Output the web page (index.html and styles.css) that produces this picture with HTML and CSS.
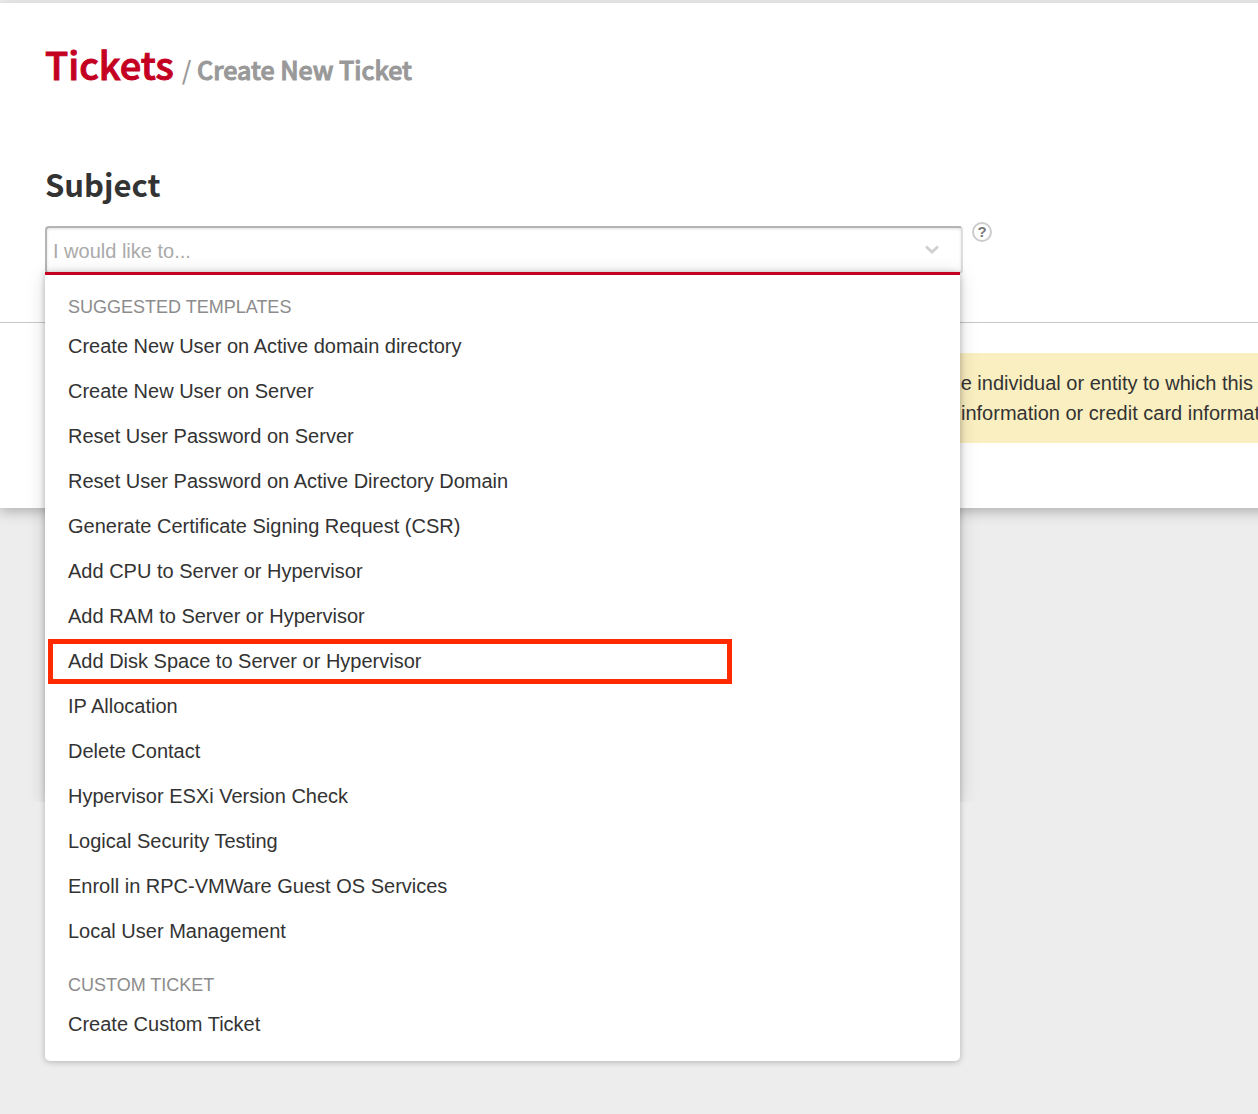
FILE: index.html
```html
<!DOCTYPE html>
<html lang="en">
<head>
<meta charset="utf-8">
<title>Tickets / Create New Ticket</title>
<meta name="viewport" content="width=device-width, initial-scale=1">
<link rel="stylesheet" href="styles.css">
</head>
<body>
<main class="panel">
  <header class="page-header">
    <h1 class="title">Tickets</h1>
    <p class="crumb"><span class="slash">/</span> Create New Ticket</p>
  </header>
  <section class="subject">
    <h2 class="subject-title"><label for="subject">Subject</label></h2>
    <div class="subject-row">
      <div class="combo">
        <input class="combo-input" id="subject" type="text" placeholder="I would like to..." autocomplete="off">
        <svg class="chevron" viewBox="0 0 14 9" aria-hidden="true"><path d="M1 1.5 7 7 13 1.5"/></svg>
        <div class="menu">
          <h3 class="group">SUGGESTED TEMPLATES</h3>
          <ul class="options">
            <li><button class="option" type="button">Create New User on Active domain directory</button></li>
            <li><button class="option" type="button">Create New User on Server</button></li>
            <li><button class="option" type="button">Reset User Password on Server</button></li>
            <li><button class="option" type="button">Reset User Password on Active Directory Domain</button></li>
            <li><button class="option" type="button">Generate Certificate Signing Request (CSR)</button></li>
            <li><button class="option" type="button">Add CPU to Server or Hypervisor</button></li>
            <li><button class="option" type="button">Add RAM to Server or Hypervisor</button></li>
            <li><button class="option option-marked" type="button">Add Disk Space to Server or Hypervisor</button></li>
            <li><button class="option" type="button">IP Allocation</button></li>
            <li><button class="option" type="button">Delete Contact</button></li>
            <li><button class="option" type="button">Hypervisor ESXi Version Check</button></li>
            <li><button class="option" type="button">Logical Security Testing</button></li>
            <li><button class="option" type="button">Enroll in RPC-VMWare Guest OS Services</button></li>
            <li><button class="option" type="button">Local User Management</button></li>
          </ul>
          <h3 class="group group-custom">CUSTOM TICKET</h3>
          <ul class="options">
            <li><button class="option" type="button">Create Custom Ticket</button></li>
          </ul>
        </div>
      </div>
      <button class="help" type="button">?</button>
    </div>
  </section>
  <section class="details">
    <div class="notice">
      <p class="notice-line">the individual or entity to which this</p>
      <p class="notice-line notice-next">information or credit card information</p>
    </div>
  </section>
</main>
</body>
</html>
```
FILE: styles.css
```css
* { box-sizing: border-box; }

body {
  margin: 0;
  padding: 3px 0 0;
  min-height: 100vh;
  background: #ededed;
  color: #333;
  font-family: "Liberation Sans", Arial, sans-serif;
  font-size: 20px;
  line-height: 30px;
  overflow-x: hidden;
}

h1, h2, h3, p, ul { margin: 0; padding: 0; }
ul { list-style: none; }
button { font: inherit; color: inherit; cursor: pointer; }

/* The panel runs on past the right edge of the window. */
.panel {
  margin-right: -16px;
  background: #fff;
  box-shadow: 0 4px 12px rgba(0, 0, 0, .25);
}

.page-header {
  display: flex;
  align-items: baseline;
  gap: 8px;
  padding: 31px 45px 0;
  font-family: "Noto Sans CJK SC", "Source Sans Pro", sans-serif;
}
.title {
  color: #c40022;
  font-size: 38px;
  font-weight: 500;
  line-height: 60px;
  -webkit-text-stroke: 1px;
}
.crumb {
  color: #999;
  font-size: 25px;
  font-weight: 500;
  -webkit-text-stroke: 1px;
}
.slash { -webkit-text-stroke: 0; }

.subject {
  padding: 66px 45px 48px;
  border-bottom: 1px solid #c8c8c8;
}
.subject-title {
  margin-bottom: 18px;
  font-family: "Noto Sans CJK SC", "Source Sans Pro", sans-serif;
  font-size: 31px;
  font-weight: 700;
  line-height: 48px;
}
.subject-row {
  display: flex;
  align-items: flex-start;
  gap: 9px;
}

.combo {
  position: relative;
  flex: 0 1 918px;
}
.combo-input {
  display: block;
  width: 100%;
  height: 48px;
  padding: 2px 40px 0 6px;
  border: 2px solid #b5b5b5;
  border-right-color: #ddd;
  border-bottom-color: #ddd;
  border-radius: 4px;
  background: #fff;
  box-shadow: inset 0 1px 3px rgba(0, 0, 0, .12);
  color: #333;
  font: inherit;
  outline: none;
}
.combo-input::placeholder { color: #aaa; opacity: 1; }
.chevron {
  position: absolute;
  top: 19px;
  right: 24px;
  width: 14px;
  height: 9px;
  fill: none;
  stroke: #d0d0d0;
  stroke-width: 3;
}

.menu {
  position: absolute;
  z-index: 2;
  top: 46px;
  left: 0;
  right: 3px;
  padding: 15px 0 14px;
  border-top: 3px solid #c40022;
  border-radius: 0 0 5px 5px;
  background: #fff;
  box-shadow: 0 1px 6px rgba(0, 0, 0, .25);
}
/* Wider, softer halo that ends part of the way down the menu. */
.menu::before {
  content: "";
  position: absolute;
  z-index: -1;
  top: -3px;
  left: 0;
  right: 0;
  height: 530px;
  box-shadow: 0 3px 18px rgba(0, 0, 0, .15);
  clip-path: inset(-18px -18px 0 -18px);
}
.group {
  padding-left: 23px;
  color: #8c8c8c;
  font-size: 18px;
  font-weight: 400;
  line-height: 34px;
}
.group-custom { margin-top: 14px; }
.option {
  display: block;
  width: 100%;
  height: 45px;
  padding: 0 23px 2px;
  border: 0;
  background: none;
  text-align: left;
}
.option-marked {
  width: 684px;
  max-width: 100%;
  margin-left: 3px;
  padding: 0 15px 2px;
  border: 5px solid #ff2a00;
}

.help {
  width: 20px;
  height: 20px;
  margin-top: -4px;
  padding: 0;
  border: 2px solid #ccc;
  border-radius: 50%;
  background: #fff;
  color: #777;
  font-size: 15px;
  font-weight: 700;
  line-height: 16px;
}

.details { padding: 30px 0 65px 45px; }
.notice {
  padding: 15px 0 15px 899px;
  background: #faefc0;
  white-space: nowrap;
}
.notice-next { padding-left: 17px; }
```
